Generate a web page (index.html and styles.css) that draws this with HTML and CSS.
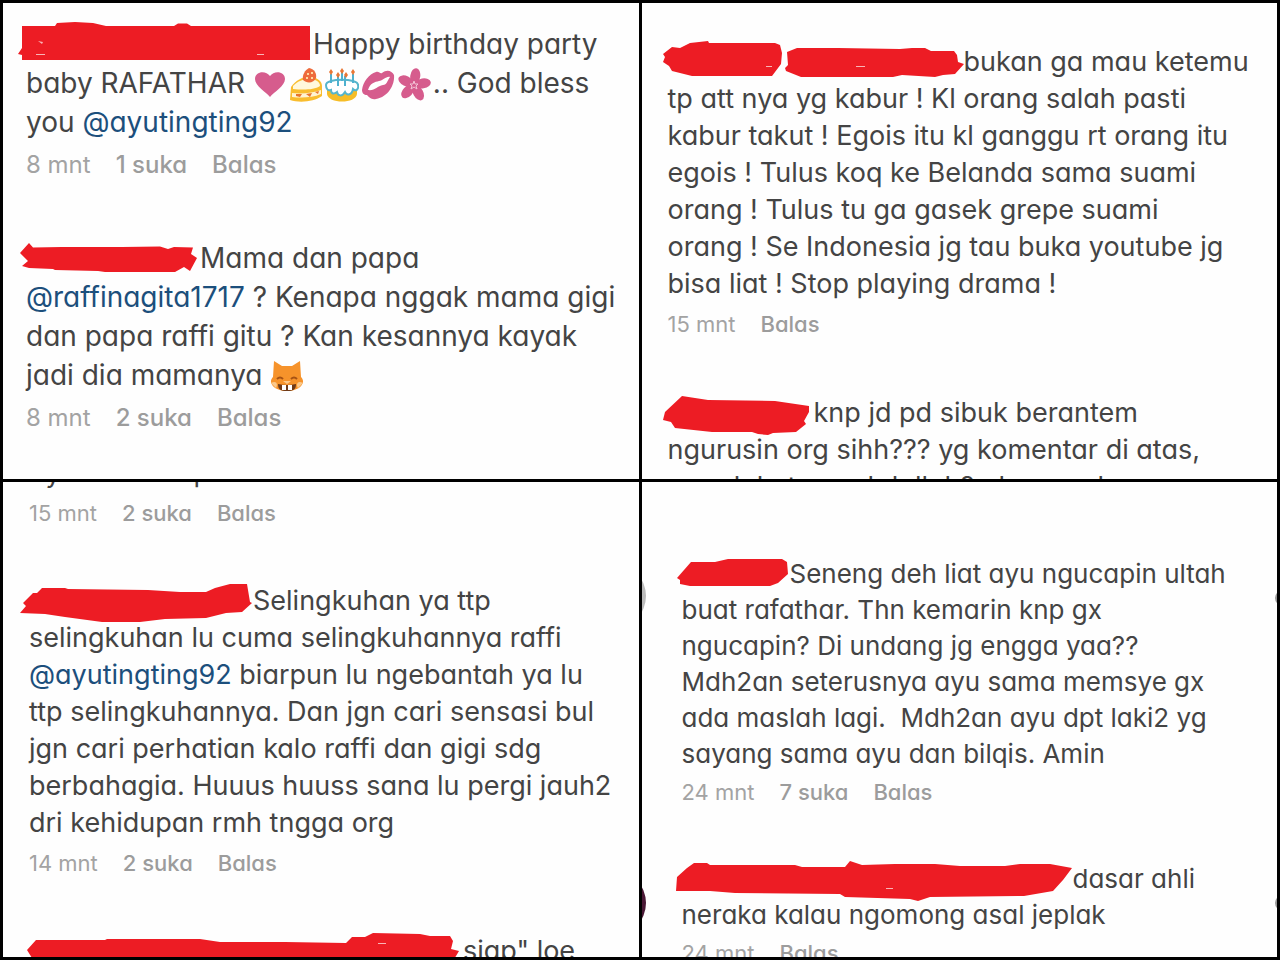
FILE: index.html
```
<!DOCTYPE html>
<html lang="id">

<head>
    <meta charset="UTF-8">
    <meta name="viewport" content="width=device-width, initial-scale=1.0">
    <title>Komentar</title>
    <link rel="stylesheet" href="styles.css">
</head>

<body>
    <main class="collage">
        <!-- Top left -->
        <section class="panel panel-one">
            <article class="comment">
                <p class="text"><svg class="scribble" width="287" height="30" viewBox="26 31 287 30" aria-hidden="true"><path d="M22 26H55L57 23L75 22L93 23L106 26H174L178 23.5H187L191 26H310V60H22V55L18 54L22 48Z"/><path class="gap" d="M38 41l5 1-1 2zM36 54h9v1h-9zM257 54h7v1h-7z"/></svg>Happy birthday party<br>
                baby RAFATHAR <svg class="emoji" viewBox="0 0 34 34" role="img" aria-label="hati"><path fill="#d65c8d" d="M17 29C13 24 2 18 2 11C2 3 13 2 17 8C21 2 32 3 32 11C32 18 21 24 17 29Z"/></svg><svg class="emoji" viewBox="0 0 34 34" role="img" aria-label="kue"><path fill="#f9bd2e" d="M2 19C7 12 13 9 20 9C28 9 33 13 33 18V28C25 34 10 35 1 32Z"/><path fill="#fff8dc" d="M4 18C9 13 14 11 20 11C27 11 31 14 31 18C25 22 14 22 4 21Z"/><path fill="#fff3d0" d="M3 25C13 26 24 25 32 22V26C23 30 12 30 3 29Z"/><path fill="#e8752d" d="M7 26l6 0-2 3-4-1zM17 26l6-1-2 4zM26 24l4-1-1 3z"/><path fill="#ee6b3c" d="M20 0C25 1 28 5 27 10C25 15 18 16 14 12C13 7 16 2 20 0Z"/><path fill="#ffd9a0" d="M18 5h2v2h-2zM22 4h2v2h-2zM17 9h2v2h-2zM22 9h2v2h-2z"/></svg><svg class="emoji" viewBox="0 0 34 34" role="img" aria-label="kue ulang tahun"><path fill="#f6bd27" d="M2 20H32V26C31 36 3 36 2 26Z"/><path fill="#fff" stroke="#56b5cb" stroke-width="2" d="M1 17C1 10 33 10 33 17C34 21 31 24 28 21C27 27 22 28 20 24C17 29 13 28 12 24C8 27 6 25 6 22C3 23 1 21 1 17Z"/><path stroke="#4fb1cf" stroke-width="2" d="M6 6V15M13 8V18M20 8V18M28 6V15M17 4V13"/><path fill="#e87735" d="M6 1l2 3-2 3-2-3zM17 0l2 3-2 3-2-3zM28 1l2 3-2 3-2-3zM13 4l2 3-2 3-2-3zM21 4l2 3-2 3-2-3z"/></svg><svg class="emoji" viewBox="0 0 34 34" role="img" aria-label="ciuman"><path fill="#d65c8d" d="M1 22C2 14 8 6 15 4C18 3 19 6 21 5C26 1 31 3 33 7C34 17 27 29 15 31C10 32 8 29 6 27C3 27 1 25 1 22Z"/><path fill="#fff" d="M7 22C9 15 14 14 18 13C22 13 25 8 29 9C26 13 26 17 22 17C16 18 14 23 7 22Z"/></svg><svg class="emoji" viewBox="0 0 34 34" role="img" aria-label="bunga"><g fill="#d65c8d" transform="rotate(8 17 17)"><ellipse cx="17" cy="8" rx="5" ry="8"/><ellipse cx="17" cy="8" rx="5" ry="8" transform="rotate(72 17 17)"/><ellipse cx="17" cy="8" rx="5" ry="8" transform="rotate(144 17 17)"/><ellipse cx="17" cy="8" rx="5" ry="8" transform="rotate(216 17 17)"/><ellipse cx="17" cy="8" rx="5" ry="8" transform="rotate(288 17 17)"/><circle cx="17" cy="17" r="6"/></g><path fill="none" stroke="#f3c4d6" d="M17 13l1 3 3 0-2 2 1 3-3-2-3 2 1-3-2-2 3 0z"/></svg>.. God bless<br>
                you <a class="mention" href="#">@ayutingting92</a></p>
                <div class="meta"><time>8 mnt</time><button>1 suka</button><button>Balas</button></div>
            </article>
            <article class="comment">
                <p class="text"><svg class="scribble" width="174" height="30" viewBox="26 245 174 30" aria-hidden="true"><path d="M20 253L29 243L33 247.5L62 247H122L160 246.500L168 249L174 247L193 247.500L191 254L197 258L190 271L184 267L175 272H105L98 271L55 270L53 269L29 268L22 266L28 261Z"/></svg>Mama dan papa<br>
                <a class="mention" href="#">@raffinagita1717</a> ? Kenapa nggak mama gigi<br>
                dan papa raffi gitu ? Kan kesannya kayak<br>
                jadi dia mamanya <svg class="emoji" viewBox="0 0 34 34" role="img" aria-label="kucing tersenyum"><path fill="#f6932b" d="M4 1L12 6H22L30 1L31 17C37 23 29 31 17 31C5 31-3 23 3 17Z"/><path fill="#fbc98a" d="M1 23C7 20 8 25 6 28ZM33 23C27 20 26 25 28 28Z"/><path fill="none" stroke="#a65214" stroke-width="2" d="M7 19Q10 16 13 19M21 19Q24 16 27 19"/><path fill="#6e3a18" d="M8 24Q17 26 26 24C26 30 23 31 17 31C11 31 8 30 8 24Z"/><path fill="#fff" d="M12 25h4v5h-4zM18 25h4v5h-4z"/><path fill="#fbc98a" d="M13 21h8l-4 3z"/></svg></p>
                <div class="meta"><time>8 mnt</time><button>2 suka</button><button>Balas</button></div>
            </article>
        </section>

        <!-- Top right -->
        <section class="panel panel-two">
            <article class="comment">
                <p class="text"><svg class="scribble" width="296" height="30" viewBox="668 49 296 30" aria-hidden="true"><path d="M663 54L672 47L680 48L690 43L708 41L709 43H775L780 45L782 53L781 64L772 76H692L672 71L669 66L663 62L665 57Z"/><path d="M787 52L797 48H838L900 49L912 48H925L931 51H954L957 55L958 62L964 64L955 74L943 75L935 77L902 75L893 77H801L786 71L785 68L788 65Z"/><path class="gap" d="M766 66h6v1h-6zM856 66h9v1h-9z"/></svg>bukan ga mau ketemu<br>
                tp att nya yg kabur ! Kl orang salah pasti<br>
                kabur takut ! Egois itu kl ganggu rt orang itu<br>
                egois ! Tulus koq ke Belanda sama suami<br>
                orang ! Tulus tu ga gasek grepe suami<br>
                orang ! Se Indonesia jg tau buka youtube jg<br>
                bisa liat ! Stop playing drama !</p>
                <div class="meta"><time>15 mnt</time><button>Balas</button></div>
            </article>
            <article class="comment">
                <p class="text"><svg class="scribble" width="146" height="30" viewBox="668 400 146 30" aria-hidden="true"><path d="M682 396L708 400L775 401L809 406V412L804 421L806 424L796 432L773 433L768 435L758 434L752 432H712L675 428L671 422L663 420L665 412Z"/></svg>knp jd pd sibuk berantem<br>
                ngurusin org sihh??? yg komentar di atas,<br>
                mandakat mau kdallah? akarma d</p>
            </article>
        </section>

        <!-- Bottom left -->
        <section class="panel panel-three">
            <article class="comment cut">
                <p class="text">ayu sama di p</p>
                <div class="meta"><time>15 mnt</time><button>2 suka</button><button>Balas</button></div>
            </article>
            <article class="comment">
                <p class="text"><svg class="scribble" width="224" height="30" viewBox="29 588 224 30" aria-hidden="true"><path d="M20 614L26 607L23 604L33 594H37L42 589H65L68 590L148 591L180 593H206L215 589L230 585H247L250 603L252 604L242 613L226 614L206 619L165 620L140 623H102L65 618L45 615Z"/></svg>Selingkuhan ya ttp<br>
                selingkuhan lu cuma selingkuhannya raffi<br>
                <a class="mention" href="#">@ayutingting92</a> biarpun lu ngebantah ya lu<br>
                ttp selingkuhannya. Dan jgn cari sensasi bul<br>
                jgn cari perhatian kalo raffi dan gigi sdg<br>
                berbahagia. Huuus huuss sana lu pergi jauh2<br>
                dri kehidupan rmh tngga org</p>
                <div class="meta"><time>14 mnt</time><button>2 suka</button><button>Balas</button></div>
            </article>
            <article class="comment">
                <p class="text"><svg class="scribble" width="434" height="30" viewBox="29 936 434 30" aria-hidden="true"><path d="M27 949L36 939H105L107 938H200L220 941H285L346 942L352 936H365L373 932L420 933L430 935H450L453 940L451 948L459 950L453 960H60L32 957Z"/><path class="gap" d="M378 942h8v1h-8z"/></svg>siap" loe</p>
            </article>
        </section>

        <!-- Bottom right -->
        <section class="panel panel-four">
            <article class="comment">
                <p class="text"><svg class="scribble" width="108" height="30" viewBox="682 561 108 30" aria-hidden="true"><path d="M677 579L691 563H715L728 560H782L787 563L788 575L778 584L770 587H690L680 585V581Z"/></svg>Seneng deh liat ayu ngucapin ultah<br>
                buat rafathar. Thn kemarin knp gx<br>
                ngucapin? Di undang jg engga yaa??<br>
                Mdh2an seterusnya ayu sama memsye gx<br>
                ada maslah lagi.&nbsp; Mdh2an ayu dpt laki2 yg<br>
                sayang sama ayu dan bilqis. Amin</p>
                <div class="meta"><time>24 mnt</time><button>7 suka</button><button>Balas</button></div>
                <span class="avatar avatar-first"></span>
                <span class="like"></span>
            </article>
            <article class="comment">
                <p class="text"><svg class="scribble" width="391" height="30" viewBox="682 865 391 30" aria-hidden="true"><path d="M677 877L687 868L694 863H707L710 865H795L802 867H845L850 861L862 865L895 864H935L960 866H1005L1020 864H1050L1072 868L1063 880L1053 891L1024 896L930 897L918 901L910 899L845 897L840 894L735 893L710 891H676Z"/><path class="gap" d="M886 888h7v1h-7z"/></svg>dasar ahli<br>
                neraka kalau ngomong asal jeplak</p>
                <div class="meta"><time>24 mnt</time><button>Balas</button></div>
                <span class="avatar avatar-second"></span>
                <span class="like"></span>
            </article>
        </section>
    </main>
</body>

</html>
```
FILE: styles.css
```
* {
    box-sizing: border-box;
}

body {
    margin: 0;
    background-color: #000;
    color: #444;
    font-family: Inter, "Open Sans", sans-serif;
    font-feature-settings: "cv11";
}

.collage {
    display: grid;
    grid-template-columns: repeat(2, minmax(0, 1fr));
    grid-template-rows: repeat(2, minmax(0, 1fr));
    gap: 3px;
    height: 100vh;
    padding: 3px;
}

.panel {
    display: flex;
    flex-direction: column;
    overflow: hidden;
    background-color: #fefefe;
    font-size: 27px;
    line-height: 37px;
}

.panel-one {
    gap: 60px;
    padding: 22px 0 0 23px;
    font-size: 28px;
    line-height: 39px;
}

.panel-two {
    gap: 56px;
    padding: 40px 0 0 26px;
}

.panel-three {
    gap: 55px;
    padding-left: 26px;
}

.panel-four {
    gap: 55px;
    padding: 74px 0 0 40px;
    font-size: 26px;
    line-height: 36px;
}

.comment {
    position: relative;
    flex-shrink: 0;
}

/* the first line is mostly above the edge of the panel */
.cut {
    margin-top: -28px;
}

.text {
    margin: 0;
    white-space: nowrap;
}

.mention {
    color: #1c4f7c;
    text-decoration: none;
}

.meta {
    display: flex;
    gap: 25px;
    margin-top: 8px;
    color: #a3a3a3;
    font-size: 22px;
    line-height: 28px;
}

.panel-one .meta {
    margin-top: 9px;
    font-size: 24px;
}

.panel-four .meta {
    margin-top: 6px;
}

.meta button {
    padding: 0;
    border: none;
    background: none;
    color: #9c9c9c;
    font: inherit;
    font-weight: 500;
    font-feature-settings: inherit;
    cursor: pointer;
}

.scribble {
    overflow: visible;
    vertical-align: middle;
    fill: #ed1c24;
}

.scribble .gap {
    fill: #f9b4b6;
}

.emoji {
    width: 34px;
    height: 34px;
    margin-right: 2px;
    vertical-align: middle;
}

.avatar,
.like {
    position: absolute;
    border-radius: 50%;
}

.avatar {
    left: -100px;
    width: 64px;
    height: 64px;
}

.avatar-first {
    top: 8px;
    background-color: #bbb;
}

.avatar-second {
    top: 10px;
    background-color: #4a1835;
}

.like {
    top: 34px;
    right: -14px;
    width: 16px;
    height: 16px;
    background-color: #999;
}
```
